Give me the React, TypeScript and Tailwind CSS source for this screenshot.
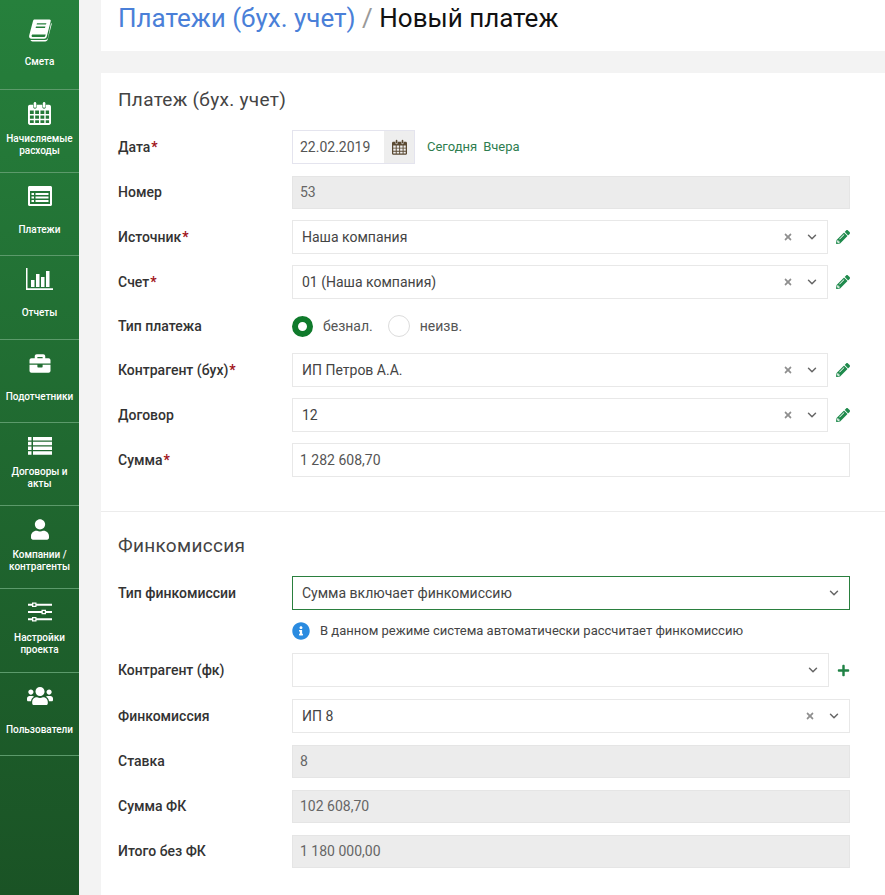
import React from "react";
import { FaCalendarAlt, FaPen, FaPencilAlt, FaPlus, FaTimes, FaInfoCircle, FaUser, FaUsers, FaBriefcase } from "react-icons/fa";
import { ChevronDown } from "lucide-react";

const BookIcon = () => (
  <svg viewBox="0 0 24 24" className="w-[24px] h-[24px]" fill="#fff">
    <path d="M6.5 1.5h15c1 0 1.5.8 1.2 1.7l-4 15.5c-.3 1.2-1.2 2-2.6 2H3.5C1.6 20.7.8 19 1.2 17.4L5 3c.2-.9.7-1.5 1.5-1.5zM9 5.2l-.4 1.4h9.4l.4-1.4zM8 8.6l-.4 1.4H17l.4-1.4zM4.6 16.4c-1.2 0-1.4 2.6.2 2.6h11.4c.5 0 .8-.2 1-.8l.5-1.8z" fillRule="evenodd" />
    <path d="M23 5l.8.8-4 15.5c-.4 1.4-1.2 2.1-2.6 2.1H4.5c-1 0-1.8-.6-2-1.4h14.6c1.5 0 2.5-.7 2.9-2.2z" />
  </svg>
);
const CalendarGridIcon = ({ cls = "w-[23px] h-[24px]", color = "#fff" }: { cls?: string; color?: string }) => (
  <svg viewBox="0 0 24 25" className={cls} fill={color}>
    <path fillRule="evenodd" d="M2 4h3.5v2.2c0 1 .8 1.8 1.8 1.8S9 7.2 9 6.2V4h6v2.2c0 1 .8 1.8 1.8 1.8s1.7-.8 1.7-1.8V4H22c1 0 2 1 2 2v17c0 1-1 2-2 2H2c-1 0-2-1-2-2V6c0-1 1-2 2-2zM2 10v3.5h4V10zm5.5 0v3.5h4V10zm5.500 0v3.500h4V10zm5.500 0v3.500h3.500V10zM2 15v3.500h4V15zm5.500 0v3.500h4V15zm5.500 0v3.500h4V15zm5.500 0v3.500h3.500V15zM2 20v3h4v-3zm5.500 0v3h4v-3zm5.500 0v3h4v-3zm5.500 0v3h3.500v-3z" />
    <rect x="6" y="1" width="2.600" height="6" rx="1.300" /><rect x="15.500" y="1" width="2.600" height="6" rx="1.300" />
  </svg>
);
const ListAltIcon = () => (
  <svg viewBox="0 0 24 20" className="w-[24px] h-[20px]" fill="#fff">
    <path fillRule="evenodd" d="M1.500 0h21c.8 0 1.500.7 1.500 1.500v17c0 .8-.7 1.500-1.500 1.500h-21C.7 20 0 19.300 0 18.500v-17C0 .7.700 0 1.500 0zM2 5v13h20V5zm1.500 2h2.500v2H3.500zm4 0h13v2h-13zm-4 3.500h2.500v2H3.500zm4 0h13v2h-13zm-4 3.500h2.500v2H3.500zm4 0h13v2h-13z" />
  </svg>
);
const ChartIcon = () => (
  <svg viewBox="0 0 27 22" className="w-[27px] h-[22px]" fill="#fff">
    <path d="M0 0h1.500v20.300H27V22H0z" /><rect x="5" y="12" width="3.500" height="7" /><rect x="10" y="6" width="3.500" height="13" /><rect x="15" y="9" width="3.500" height="10" /><rect x="20" y="3" width="3.500" height="16" />
  </svg>
);
const ThListIcon = () => (
  <svg viewBox="0 0 24 18" className="w-[24px] h-[18px]" fill="#fff">
    <path d="M0 0h3.500v3.500H0zM5 0h19v3.500H5zM0 4.700h3.500v3.500H0zM5 4.700h19v3.500H5zM0 9.500h3.500V13H0zM5 9.500h19V13H5zM0 14.300h3.500v3.500H0zM5 14.300h19v3.500H5z" />
  </svg>
);
const SlidersIcon = () => (
  <svg viewBox="0 0 24 20" className="w-[24px] h-[20px]" fill="#fff">
    <path fillRule="evenodd" d="M0 1.800h4V.500h4.500v1.300H24v2H8.500v1.300H4V3.800H0zM5.300 1.800v2h2v-2zM0 9h13.500V7.700H18V9h6v2h-6v1.300h-4.500V11H0zM14.800 9v2h2V9zM0 16.200h4V15h4.500v1.200H24v2H8.500v1.300H4v-1.300H0zM5.300 16.200v2h2v-2z" />
  </svg>
);

const nav: { icon: React.ReactNode; label: string[]; h: string }[] = [
  { icon: <BookIcon />, label: ["Смета"], h: "h-[90px]" },
  { icon: <CalendarGridIcon />, label: ["Начисляемые", "расходы"], h: "h-[83px]" },
  { icon: <ListAltIcon />, label: ["Платежи"], h: "h-[83px]" },
  { icon: <ChartIcon />, label: ["Отчеты"], h: "h-[84px]" },
  { icon: <FaBriefcase className="text-white w-[24px] h-[21px]" />, label: ["Подотчетники"], h: "h-[83px]" },
  { icon: <ThListIcon />, label: ["Договоры и", "акты"], h: "h-[83px]" },
  { icon: <FaUser className="text-white w-[18px] h-[21px]" />, label: ["Компании /", "контрагенты"], h: "h-[83px]" },
  { icon: <SlidersIcon />, label: ["Настройки", "проекта"], h: "h-[84px]" },
  { icon: <FaUsers className="text-white w-[26px] h-[24px]" />, label: ["Пользователи"], h: "h-[83px]" },
];

const Sidebar = () => (
  <aside className="w-[79px] shrink-0 min-h-[895px] bg-gradient-to-b from-[#26803c] to-[#1a5325] text-white font-medium">
    {nav.map((n, i) => (
      <div key={i} className={`${n.h} border-b border-[#5c9a6b] flex flex-col items-center relative`}>
        <div className={`${i === 0 ? "mt-[17px]" : "mt-[10px]"} h-[26px] flex items-center justify-center`}>{n.icon}</div>
        <div className={`${n.label.length === 1 ? (i === 0 ? "mt-[13px]" : "mt-[15px]") : "mt-[7px]"} text-[10px] leading-[12px] text-center whitespace-nowrap`}>
          {n.label.map((l) => <div key={l}>{l}</div>)}
        </div>
      </div>
    ))}
  </aside>
);

const Row = ({ label, req, mb = "mb-[11px]", children }: { label: string; req?: boolean; mb?: string; children: React.ReactNode }) => (
  <div className={`flex items-center h-[34px] ${mb}`}>
    <div className="w-[174px] shrink-0 text-[14px] font-medium text-[#333]">
      {label}
      {req && <span className="text-[#a1131a] ml-[1px] font-bold">*</span>}
    </div>
    <div className="w-[558px] flex items-center">{children}</div>
  </div>
);

const Disabled = ({ v }: { v: string }) => (
  <div className="w-full h-[33px] bg-[#ececec] border border-[#e5e5e5] pl-[7px] flex items-center text-[14px] text-[#666]">{v}</div>
);

const Chev = () => <ChevronDown className="w-[14px] h-[14px] text-[#666]" strokeWidth={2.500} />;

const Select = ({ v, clear = true, action, full, border = "border-[#e8e8e8]" }: { v?: string; clear?: boolean; action?: "pen" | "plus"; full?: boolean; border?: string }) => (
  <>
    <div className={`${full ? "w-full" : action === "plus" ? "w-[537px]" : "w-[536px]"} h-[34px] bg-white border ${border} pl-[9px] pr-[8px] flex items-center text-[14px] text-[#444]`}>
      <span className="flex-1">{v}</span>
      {clear && <FaTimes className="w-[10px] h-[10px] text-[#8f8f8f] mr-[12px]" />}
      <Chev />
    </div>
    {action === "pen" && <FaPencilAlt className="w-[14px] h-[14px] text-[#1f8a4c] ml-[8px]" />}
    {action === "plus" && <FaPlus className="w-[13px] h-[13px] text-[#1f8245] ml-[8px]" />}
  </>
);

const Radio = ({ on, label }: { on?: boolean; label: string }) => (
  <div className="flex items-center">
    {on ? (
      <span className="w-[21px] h-[21px] rounded-full border-[6px] border-[#0f7a2b] bg-white" />
    ) : (
      <span className="w-[22px] h-[22px] rounded-full border border-[#dcdcdc] bg-white" />
    )}
    <span className="ml-[10px] text-[14px] text-[#555]">{label}</span>
  </div>
);

export default function App() {
  return (
    <div className="flex w-[885px] h-[895px] overflow-hidden bg-[#f3f3f3] font-['Roboto',sans-serif]">
      <Sidebar />
      <main className="ml-[22px] flex-1 flex flex-col">
        <div className="h-[51px] bg-white pl-[17px] pt-[1px] text-[26px] leading-[34px] whitespace-nowrap">
          <span className="text-[#4a7fd8]">Платежи (бух. учет)</span>
          <span className="text-[#999]"> / </span>
          <span className="text-[#111]">Новый платеж</span>
        </div>
        <div className="mt-[22px] flex-1 bg-white">
          <div className="pl-[17px]">
            <h2 className="pt-[14px] h-[57px] text-[19px] leading-[26px] tracking-[0.3px] text-[#444]">Платеж (бух. учет)</h2>
            <Row label="Дата" req>
              <div className="w-[123px] h-[34px] flex border border-[#e4e4ee] bg-white">
                <span className="flex-1 pl-[7px] flex items-center text-[14px] text-[#555]">22.02.2019</span>
                <span className="w-[30px] bg-[#eeeeee] flex items-center justify-center">
                  <CalendarGridIcon cls="w-[15px] h-[16px]" color="#5b4a33" />
                </span>
              </div>
              <span className="ml-[12px] text-[13px] text-[#2e7d4f]">Сегодня</span>
              <span className="ml-[6px] text-[13px] text-[#2e7d4f]">Вчера</span>
            </Row>
            <Row label="Номер"><Disabled v="53" /></Row>
            <Row label="Источник" req><Select v="Наша компания" action="pen" /></Row>
            <Row label="Счет" req mb="mb-[10px]"><Select v="01 (Наша компания)" action="pen" /></Row>
            <Row label="Тип платежа" mb="mb-[10px]">
              <Radio on label="безнал." />
              <div className="ml-[15px]"><Radio label="неизв." /></div>
            </Row>
            <Row label="Контрагент (бух)" req><Select v="ИП Петров А.А." action="pen" /></Row>
            <Row label="Договор"><Select v="12" action="pen" /></Row>
            <Row label="Сумма" req mb="mb-[0px]">
              <div className="w-full h-[34px] bg-white border border-[#e8e8e8] pl-[7px] flex items-center text-[14px] text-[#555]">1 282 608,70</div>
            </Row>
          </div>
          <div className="mt-[34px] border-t border-[#ececec] pl-[17px]">
            <h2 className="pt-[21px] h-[64px] text-[19px] leading-[26px] tracking-[0.3px] text-[#444]">Финкомиссия</h2>
            <Row label="Тип финкомиссии" mb="mb-[9px]">
              <Select v="Сумма включает финкомиссию" clear={false} full border="border-[#2a7f3e]" />
            </Row>
            <div className="flex items-center h-[24px] ml-[174px] mb-[10px] text-[13px] text-[#444]">
              <FaInfoCircle className="w-[18px] h-[18px] text-[#2a8be0]" />
              <span className="ml-[10px]">В данном режиме система автоматически рассчитает финкомиссию</span>
            </div>
            <Row label="Контрагент (фк)" mb="mb-[12px]"><Select clear={false} action="plus" /></Row>
            <Row label="Финкомиссия"><Select v="ИП 8" full /></Row>
            <Row label="Ставка"><Disabled v="8" /></Row>
            <Row label="Сумма ФК"><Disabled v="102 608,70" /></Row>
            <Row label="Итого без ФК"><Disabled v="1 180 000,00" /></Row>
          </div>
        </div>
      </main>
    </div>
  );
}
